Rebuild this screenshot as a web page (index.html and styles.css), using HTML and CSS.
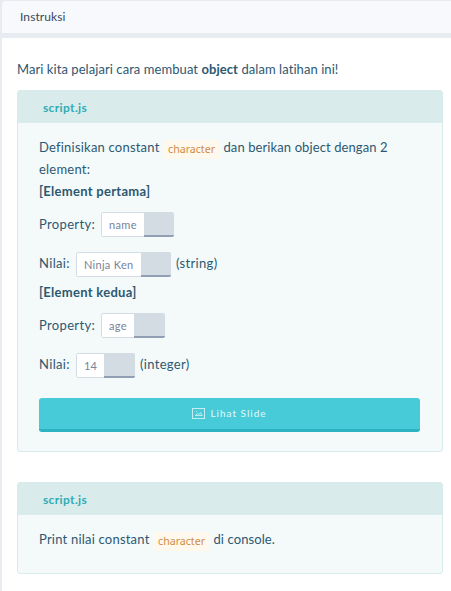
FILE: index.html
```html
<!DOCTYPE html>
<html lang="id">
<head>
<meta charset="utf-8">
<title>Instruksi</title>
<link rel="stylesheet" href="styles.css">
</head>
<body>
<div class="panel">
  <header class="panel-header">Instruksi</header>
  <main class="content">
    <p class="intro">Mari kita pelajari cara membuat <strong>object</strong> dalam latihan ini!</p>
    <section class="card">
      <h2 class="card-title">script.js</h2>
      <div class="card-body">
        <p class="text">Definisikan constant <code>character</code><span class="tail"> dan berikan object dengan 2</span> element:</p>
        <p class="text"><strong>[Element pertama]</strong></p>
        <div class="row"><span>Property:</span><span class="copy"><span class="value w43">name</span><span class="copy-btn"></span></span></div>
        <div class="row nilai"><span>Nilai:</span><span class="copy"><span class="value w65">Ninja Ken</span><span class="copy-btn"></span></span><span>(string)</span></div>
        <p class="text"><strong>[Element kedua]</strong></p>
        <div class="row"><span>Property:</span><span class="copy"><span class="value w33">age</span><span class="copy-btn wide"></span></span></div>
        <div class="row nilai"><span>Nilai:</span><span class="copy"><span class="value w28">14</span><span class="copy-btn wide"></span></span><span>(integer)</span></div>
        <button class="slide-btn">
          <svg class="icon" width="13" height="11" viewBox="0 0 13 11" fill="none" stroke="currentColor"><rect x=".5" y=".5" width="12" height="10"/><path d="M3 7.5H10.5M3.5 7.5L5.5 5.5L7 6.5L8.5 4.5L10 7.5M4 3.5H5" stroke-width=".9"/></svg>
          <span>Lihat Slide</span>
        </button>
      </div>
    </section>
    <section class="card">
      <h2 class="card-title">script.js</h2>
      <div class="card-body">
        <p class="text">Print nilai constant <code>character</code><span class="tail"> di console.</span></p>
      </div>
    </section>
  </main>
</div>
</body>
</html>
```
FILE: styles.css
```css
* { box-sizing: border-box; }
body {
  margin: 0;
  background: #e8ecf0;
  font-family: Lato, "Liberation Sans", sans-serif;
  font-size: 13px;
  line-height: 22px;
  color: #2d5871;
}
p, h2 { margin: 0; }
.panel {
  height: 591px;
  padding: 1px 0 0 2px;
  overflow: hidden;
}
.panel-header {
  height: 32px;
  padding-left: 18px;
  border-top-left-radius: 4px;
  background: #f8f9fd;
  color: #38475a;
  font-size: 12px;
  line-height: 32px;
  letter-spacing: 0.1px;
}
.content {
  height: 553px;
  margin-top: 5px;
  padding: 20px 8px 0 15px;
  background: #fff;
}
.intro { margin-bottom: 10px; letter-spacing: 0.065px; }
.card {
  margin-bottom: 30px;
  border: 1px solid #d9ebea;
  border-radius: 3px;
  background: #f4fafa;
}
.card-title {
  height: 32px;
  padding: 1px 25px 0;
  background: #d9ebea;
  color: #2fabb5;
  font-size: 12px;
  line-height: 32px;
  letter-spacing: 0.35px;
}
.card-body {
  padding: 13px 22px 19px 21px;
  letter-spacing: 0.21px;
}
.card + .card .card-body { padding-bottom: 23px; }
.text strong { letter-spacing: 0.28px; }
.tail { letter-spacing: 0.1px; }
code {
  display: inline-block;
  height: 19px;
  margin: -4px 0;
  padding: 0 5px;
  border-radius: 4px;
  background: #fff8ec;
  color: #cf8c45;
  font-family: "Noto Sans", sans-serif;
  font-size: 10.6px;
  line-height: 19px;
  letter-spacing: 0;
  vertical-align: -1px;
}
.row {
  display: flex;
  gap: 6px;
  height: 39.5px;
  padding-top: 10px;
  line-height: 24px;
}
.row.nilai { line-height: 22px; }
.row > span:first-child { letter-spacing: 0.34px; }
.row > .copy + span { margin-left: -1px; letter-spacing: 0.34px; }
.copy {
  display: flex;
  height: 25px;
  border-radius: 2px;
  overflow: hidden;
}
.value {
  border: 1px solid #d3dbe3;
  border-right: 0;
  border-radius: 2px 0 0 2px;
  padding-left: 7px;
  background: #fff;
  color: #77839a;
  font-size: 11px;
  letter-spacing: 0.3px;
  line-height: 24px;
  white-space: nowrap;
}
.nilai .value { line-height: 23px; }
.w28 { width: 28px; }
.w33 { width: 33px; }
.w43 { width: 43px; }
.w65 { width: 65px; }
.copy-btn {
  width: 30px;
  border-bottom: 2px solid #929eb4;
  background: #d3dbe3;
}
.copy-btn.wide { width: 31px; }
.slide-btn {
  display: flex;
  align-items: center;
  justify-content: center;
  gap: 5px;
  width: 100%;
  height: 34px;
  margin-top: 16px;
  padding: 0;
  border: 0;
  border-bottom: 3px solid #2cb3c1;
  border-radius: 3px;
  background: #47cbd8;
  color: #e5f9fb;
  font: 10px/16px Lato, sans-serif;
  letter-spacing: 1px;
}
.icon { opacity: 0.8; margin-top: -1px; }
.slide-btn span { margin-top: -1px; }
```
